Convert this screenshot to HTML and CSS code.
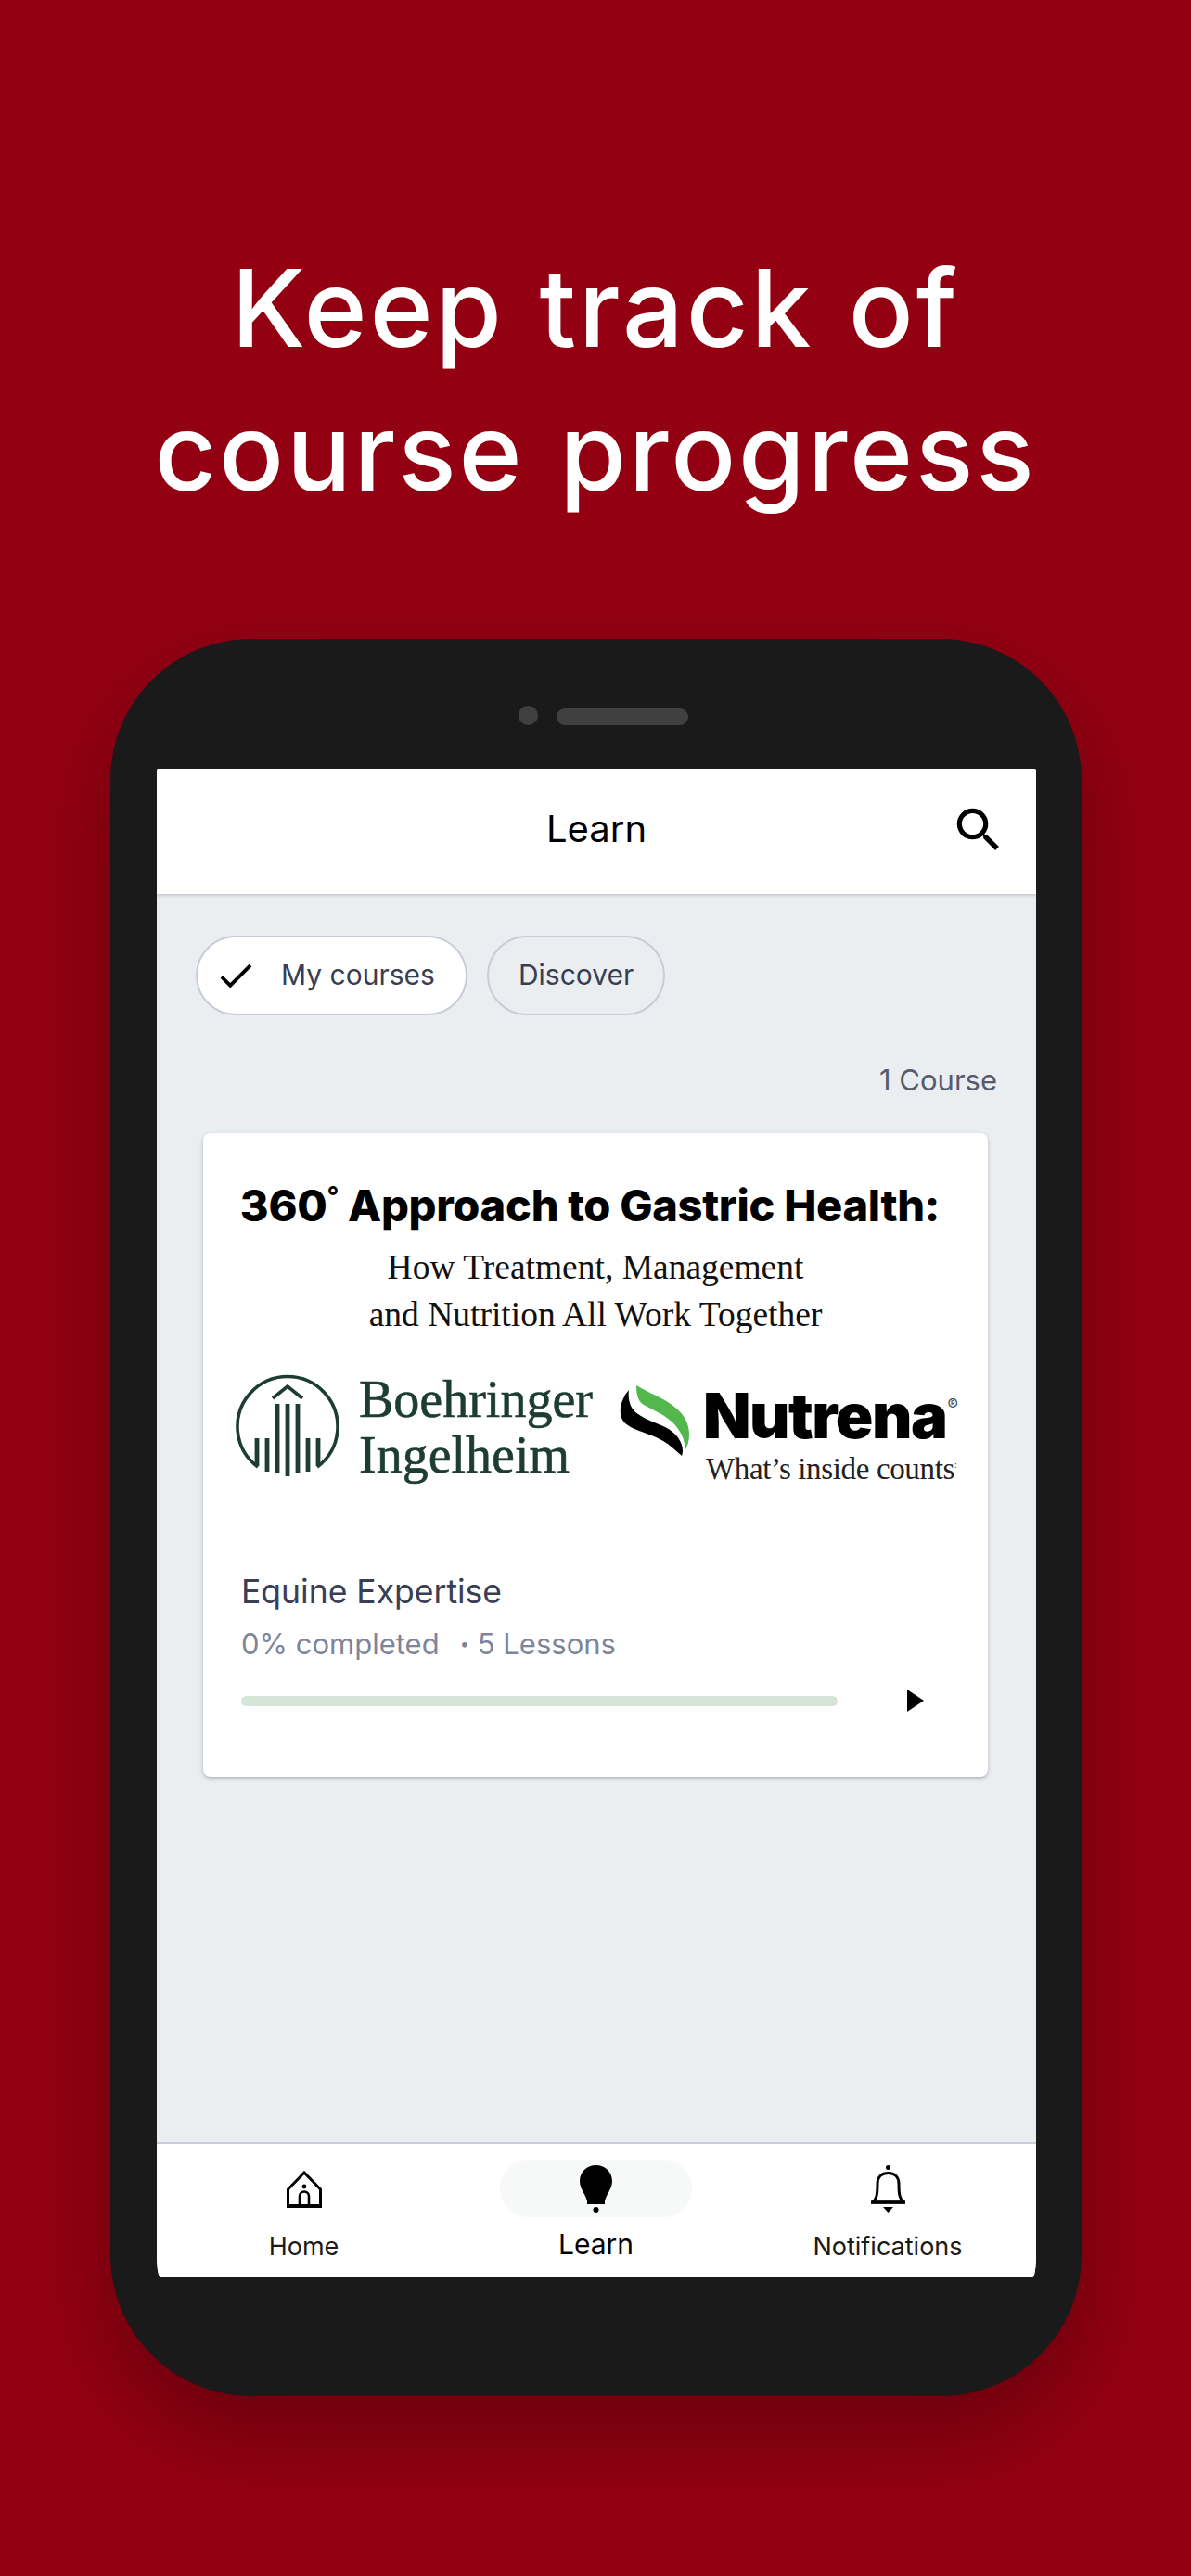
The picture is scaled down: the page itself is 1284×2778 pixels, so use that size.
FILE: index.html
```html
<!DOCTYPE html>
<html lang="en">
<head>
<meta charset="utf-8">
<title>Keep track of course progress</title>
<link rel="stylesheet" href="styles.css">
</head>
<body>
<div class="page">
  <h1 class="headline">Keep track of<br>course progress</h1>
  <div class="phone">
    <div class="sensors"><span class="camera"></span><span class="speaker"></span></div>
    <div class="screen">
      <header class="appbar">
        <span class="appbar-title">Learn</span>
        <svg class="search" viewBox="0 0 24 24"><path d="M15.5 14h-.79l-.28-.27A6.471 6.471 0 0 0 16 9.5 6.5 6.5 0 1 0 9.5 16c1.61 0 3.09-.59 4.23-1.57l.27.28v.79l5 4.99L20.49 19l-4.99-5zm-6 0C7.01 14 5 11.99 5 9.5S7.01 5 9.5 5 14 7.01 14 9.5 11.99 14 9.5 14z"/></svg>
      </header>
      <main class="content">
        <div class="chips">
          <div class="chip chip-on">
            <svg class="check" viewBox="0 0 24 24"><path d="M9 16.17L4.83 12l-1.41 1.41L9 19 21 7l-1.41-1.41z"/></svg>
            <span class="chip-text">My courses</span>
          </div>
          <div class="chip"><span class="chip-text">Discover</span></div>
        </div>
        <div class="count">1 Course</div>
        <article class="card">
          <div class="banner">
            <div class="banner-title">360<sup class="deg">°</sup> Approach to Gastric Health:</div>
            <div class="banner-sub">How Treatment, Management<br>and Nutrition All Work Together</div>
            <div class="logos">
              <div class="bi">
                <svg class="bi-mark" viewBox="0 0 112 112" fill="none" stroke="#1c3c34">
                  <path d="M24 101A54 54 0 1 1 88 101" stroke-width="3.6"/>
                  <path d="M40 27L56 14L72 27" stroke-width="3.6"/>
                  <path d="M45 33V108M56 33V111M67 33V108" stroke-width="4.8"/>
                  <path d="M34 70V106M78 70V106" stroke-width="4.8"/>
                  <path d="M23 70V100M89 70V100" stroke-width="4.8"/>
                </svg>
                <div class="bi-name">Boehringer<br>Ingelheim</div>
              </div>
              <div class="nutrena">
                <svg class="leaf" viewBox="0 0 76 76">
                  <path d="M10 5C2 14 -2 28 3 37C9 48 30 50 47 60C54 64 60 70 67 76C70 68 66 58 58 51C46 40 22 38 13 24C10 18 9 11 10 5Z" fill="#000"/>
                  <path d="M18 0C18 8 19 17 26 21C38 28 56 34 65 50C70 58 71 66 70 71C77 60 77 44 68 32C56 16 34 10 18 0Z" fill="#52b84d"/>
                </svg>
                <div class="nutrena-text">
                  <div class="nutrena-name">Nutrena<sup class="reg">®</sup></div>
                  <div class="nutrena-tag">What’s inside counts<sup class="tm">:</sup></div>
                </div>
              </div>
            </div>
          </div>
          <div class="card-body">
            <div class="course-name">Equine Expertise</div>
            <div class="course-meta"><span>0% completed</span><span class="dot">•</span><span>5 Lessons</span></div>
            <div class="progress-row">
              <div class="progress"></div>
              <svg class="play" viewBox="0 0 18 24"><path d="M0 0L18 12L0 24Z"/></svg>
            </div>
          </div>
        </article>
      </main>
      <nav class="tabs">
        <div class="tab">
          <div class="tab-icon">
            <svg class="home" viewBox="0 0 38 40" fill="none" stroke="#000">
              <path d="M1.5 38.5V20L19 2L36.5 20V38.5" stroke-width="3"/>
              <path d="M0 38H38" stroke-width="4"/>
              <path d="M14 38V27.5A5 5 0 0 1 24 27.5V38" stroke-width="2.6"/>
              <circle cx="19" cy="17" r="2.4" fill="#000" stroke="none"/>
            </svg>
          </div>
          <span class="tab-label">Home</span>
        </div>
        <div class="tab tab-on">
          <div class="tab-icon tab-pill">
            <svg class="bulb" viewBox="0 0 35 51">
              <path d="M17.5 0C27 0 35 7 35 17C35 26 29 30 27 39H8C6 30 0 26 0 17C0 7 8 0 17.5 0Z"/>
              <rect x="8" y="39" width="19" height="3"/>
              <circle cx="17.5" cy="48" r="3"/>
            </svg>
          </div>
          <span class="tab-label">Learn</span>
        </div>
        <div class="tab">
          <div class="tab-icon">
            <svg class="bell" viewBox="0 0 37 51" fill="none" stroke="#000">
              <circle cx="18.5" cy="2.5" r="2.5" fill="#000" stroke="none"/>
              <path d="M2 40C6 36 7 32 7 20C7 12 12 8.500 18.500 8.500C25 8.500 30 12 30 20C30 32 31 36 35 40Z" stroke-width="3"/>
              <path d="M0 40H37" stroke-width="3.400"/>
              <path d="M13 45H24L18.500 51Z" fill="#000" stroke="none"/>
            </svg>
          </div>
          <span class="tab-label">Notifications</span>
        </div>
      </nav>
    </div>
  </div>
</div>
</body>
</html>
```
FILE: styles.css
```css
* { box-sizing: border-box; }
html, body { margin: 0; padding: 0; }
body { background: #930012; font-family: "Inter", "Liberation Sans", sans-serif; }
.page { width: 1284px; height: 2778px; overflow: hidden; padding-top: 255px; }

.headline {
  margin: 0;
  height: 434px;
  text-align: center;
  color: #fff;
  font-family: "Inter", sans-serif;
  font-weight: 500;
  font-size: 116px;
  line-height: 155px;
  letter-spacing: 2.8px;
  word-spacing: 4px;
}

.phone {
  width: 1047px;
  height: 1895px;
  margin-left: 119px;
  background: #1a1a1a;
  border-radius: 152px;
  padding: 72px 49px 128px 50px;
  box-shadow: 0 40px 90px rgba(0, 0, 0, .28);
  display: flex;
  flex-direction: column;
}
.sensors { height: 68px; display: flex; justify-content: center; align-items: flex-start; gap: 20px; padding-left: 15px; }
.camera { width: 21px; height: 21px; border-radius: 50%; background: #404040; }
.speaker { width: 142px; height: 18px; margin-top: 3px; border-radius: 9px; background: #404040; }

.screen { flex: 1; display: flex; flex-direction: column; border-radius: 2px 2px 4px 4px / 2px 2px 24px 24px; overflow: hidden; background: #ebeef1; }

.appbar {
  height: 135px;
  background: #fff;
  display: flex;
  align-items: center;
  justify-content: center;
  padding-bottom: 6px;
  position: relative;
  box-shadow: 0 1px 4px rgba(40, 44, 60, .3);
  z-index: 1;
}
.appbar-title { font-size: 40px; color: #000; }
.search { position: absolute; right: 31px; top: 35px; width: 62px; height: 62px; fill: #000; }

.content { flex: 1; padding: 45px 42px 0 42px; }
.chips { display: flex; gap: 21px; }
.chip {
  height: 86px;
  border: 2px solid #c9cbd6;
  border-radius: 43px;
  display: flex;
  align-items: center;
  padding: 0 32px;
  font-size: 30px;
  color: #3a3e54;
}
.chip-text { padding-bottom: 2px; }
.chip-on { background: #fff; padding: 0 33px 0 18px; gap: 26px; }
.check { width: 46px; height: 46px; fill: #000; }

.count { margin-top: 50px; height: 40px; line-height: 40px; text-align: right; font-size: 31px; color: #565b6c; }

.card {
  margin: 37px 10px 0 8px;
  height: 694px;
  background: #fff;
  border-radius: 8px;
  box-shadow: 0 2px 4px rgba(40, 44, 60, .3);
  display: flex;
  flex-direction: column;
}
.banner { height: 446px; padding-top: 53px; text-align: center; color: #000; }
.banner-title { font-weight: 800; font-size: 47px; line-height: 50px; letter-spacing: -.3px; padding-right: 12px; white-space: nowrap; }
.deg { font-size: 28px; line-height: 0; font-weight: 700; }
.banner-sub { margin-top: 16px; font-family: "Liberation Serif", serif; font-size: 37.5px; line-height: 51px; color: #111; }

.logos { display: flex; margin-top: 42px; padding-left: 35px; height: 120px; text-align: left; }
.bi { display: flex; gap: 21px; width: 414px; align-items: flex-start; flex: none; }
.bi-mark { width: 112px; height: 112px; flex: none; margin-top: -4px; }
.bi-name { font-family: "Liberation Serif", serif; font-size: 56px; line-height: 60px; color: #1c3c34; margin-top: -6px; -webkit-text-stroke: .6px #1c3c34; }
.nutrena { display: flex; gap: 14px; align-items: flex-start; }
.leaf { width: 76px; height: 76px; flex: none; margin-top: 9px; }
.nutrena-text { margin-top: 11px; }
.nutrena-name { font-weight: 900; font-size: 67px; line-height: 62px; letter-spacing: -1.5px; color: #000; white-space: nowrap; }
.reg { font-size: 17px; font-weight: 400; vertical-align: 30px; line-height: 0; margin-left: 1px; letter-spacing: 0; color: #444; }
.nutrena-tag { margin-top: 7px; padding-left: 3px; font-family: "Liberation Serif", serif; font-size: 33px; line-height: 38px; letter-spacing: -.35px; color: #222; white-space: nowrap; }
.tm { font-size: 10px; line-height: 0; }

.card-body { padding: 0 40px 0 41px; }
.course-name { font-size: 35.5px; line-height: 44px; margin-top: 27px; color: #3a3e54; }
.course-meta { margin-top: 14px; font-size: 31px; line-height: 40px; color: #80849a; display: flex; }
.dot { font-size: 18px; margin: 0 9px 0 22px; }
.progress-row { margin-top: 29px; display: flex; align-items: center; height: 24px; }
.progress { width: 643px; height: 11px; border-radius: 6px; background: #d5e6d8; }
.play { width: 18px; height: 24px; margin-left: 75px; fill: #000; }

.tabs {
  height: 146px;
  flex: none;
  background: #fff;
  border-top: 2px solid #c9cbd6;
  display: grid;
  grid-template-columns: 317px 313px 316px;
}
.tab { display: flex; flex-direction: column; align-items: center; }
.tab-icon { height: 62px; margin-top: 17px; display: flex; align-items: center; justify-content: center; }
.home { width: 38px; height: 40px; margin-top: 2px; }
.bulb { width: 35px; height: 51px; fill: #000; }
.bell { width: 37px; height: 51px; }
.tab-pill { width: 207px; background: #f7f8f8; border-radius: 31px; }
.tab-label { margin-top: 14px; font-size: 27px; line-height: 36px; color: #1a1a1a; }
.tab-on .tab-label { margin-top: 11px; font-size: 30px; color: #000; }
```
